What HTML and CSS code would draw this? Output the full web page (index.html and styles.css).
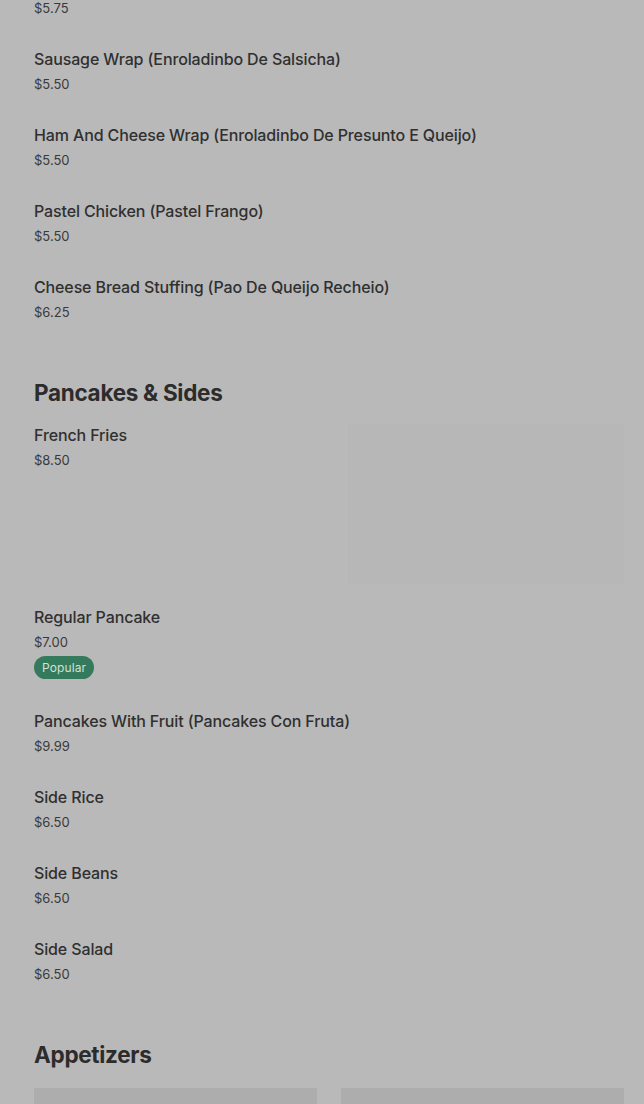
FILE: index.html
```html
<!DOCTYPE html>
<html lang="en">
<head>
<meta charset="utf-8">
<title>Menu</title>
<link rel="stylesheet" href="styles.css">
</head>
<body>
<main class="menu">
  <section class="section section--first">
    <div class="item item--partial">
      <div class="item-text">
        <div class="item-price">$5.75</div>
      </div>
    </div>
    <div class="item">
      <div class="item-text">
        <div class="item-title">Sausage Wrap (Enroladinbo De Salsicha)</div>
        <div class="item-price">$5.50</div>
      </div>
    </div>
    <div class="item">
      <div class="item-text">
        <div class="item-title">Ham And Cheese Wrap (Enroladinbo De Presunto E Queijo)</div>
        <div class="item-price">$5.50</div>
      </div>
    </div>
    <div class="item">
      <div class="item-text">
        <div class="item-title">Pastel Chicken (Pastel Frango)</div>
        <div class="item-price">$5.50</div>
      </div>
    </div>
    <div class="item">
      <div class="item-text">
        <div class="item-title">Cheese Bread Stuffing (Pao De Queijo Recheio)</div>
        <div class="item-price">$6.25</div>
      </div>
    </div>
  </section>

  <section class="section">
    <h2 class="section-title">Pancakes &amp; Sides</h2>
    <div class="item item--image">
      <div class="item-text">
        <div class="item-title">French Fries</div>
        <div class="item-price">$8.50</div>
      </div>
      <div class="item-image"></div>
    </div>
    <div class="item">
      <div class="item-text">
        <div class="item-title">Regular Pancake</div>
        <div class="item-price">$7.00</div>
        <span class="badge">Popular</span>
      </div>
    </div>
    <div class="item">
      <div class="item-text">
        <div class="item-title">Pancakes With Fruit (Pancakes Con Fruta)</div>
        <div class="item-price">$9.99</div>
      </div>
    </div>
    <div class="item">
      <div class="item-text">
        <div class="item-title">Side Rice</div>
        <div class="item-price">$6.50</div>
      </div>
    </div>
    <div class="item">
      <div class="item-text">
        <div class="item-title">Side Beans</div>
        <div class="item-price">$6.50</div>
      </div>
    </div>
    <div class="item">
      <div class="item-text">
        <div class="item-title">Side Salad</div>
        <div class="item-price">$6.50</div>
      </div>
    </div>
  </section>

  <section class="section">
    <h2 class="section-title">Appetizers</h2>
    <div class="cards">
      <div class="card"></div>
      <div class="card"></div>
    </div>
  </section>
</main>
</body>
</html>
```

FILE: styles.css
```css
html, body {
  margin: 0;
  padding: 0;
  background: #b9b9b9;
  height: 1104px;
  overflow: hidden;
}

body {
  font-family: Inter, "Noto Sans", sans-serif;
  color: #2f2f2f;
}

.menu {
  margin-top: -1px;
  padding: 0 20px 0 34px;
}

.section {
  margin-top: 40px;
}

.section--first {
  margin-top: 0;
}

.section-title {
  margin: 0;
  font-size: 22.5px;
  line-height: 32px;
  font-weight: 700;
  letter-spacing: -0.3px;
  color: #2c2c2c;
}

.item {
  display: flex;
  justify-content: space-between;
  align-items: flex-start;
  padding: 16px 0;
}

.item--partial {
  padding-top: 0;
}

.item--partial .item-price {
  margin-top: 0;
}

.item--image {
  padding-bottom: 7px;
}

.item-title {
  font-size: 16px;
  line-height: 20px;
  font-weight: 500;
  letter-spacing: -0.13px;
  color: #303030;
}

.item-price {
  margin-top: 6px;
  font-size: 13px;
  line-height: 18px;
  color: #3a3a3a;
}

.item-image {
  width: 276px;
  height: 160px;
  margin-top: -1px;
  background: #b7b7b7;
  flex-shrink: 0;
}

.badge {
  display: inline-block;
  margin-top: 5px;
  height: 23px;
  line-height: 23px;
  padding: 0 8px;
  border-radius: 12px;
  background: #357a5c;
  color: #cfe2d6;
  font-size: 12px;
  letter-spacing: 0.1px;
}

.cards {
  margin-top: 17px;
  display: grid;
  grid-template-columns: 1fr 1fr;
  gap: 24px;
}

.card {
  height: 120px;
  background: #adadad;
}
```
